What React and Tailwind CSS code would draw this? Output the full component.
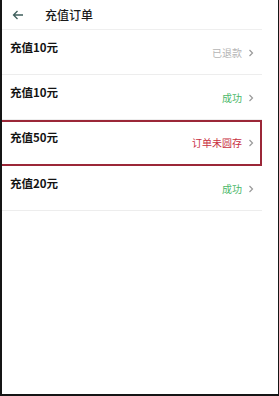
import React from "react";

const rows = [
  { title: "充值10元", status: "已退款", color: "text-[#b5b5b5]" },
  { title: "充值10元", status: "成功", color: "text-[#4cb86a]" },
  { title: "充值50元", status: "订单未圆存", color: "text-[#c8303f]", boxed: true },
  { title: "充值20元", status: "成功", color: "text-[#4cb86a]" },
];

function Chevron() {
  return (
    <svg width="6" height="8" viewBox="0 0 6 8" className="ml-[6px]">
      <path d="M1.5 1 L4.5 4 L1.5 7" fill="none" stroke="#9a9a9a" strokeWidth="1.2" />
    </svg>
  );
}

export default function App() {
  return (
    <div
      className="w-[279px] h-[396px] bg-white border-l-2 border-b-2 border-r border-[#151515] overflow-hidden"
      style={{ fontFamily: '"Noto Sans CJK SC", "Noto Sans", sans-serif' }}
    >
      <div className="w-[260px]">
        <div className="h-[30px] flex items-center border-b border-[#efefef]">
          <svg width="12" height="10" viewBox="0 0 12 10" className="ml-[10px]">
            <path d="M11 5 H1.5 M5.5 1 L1.5 5 L5.5 9" fill="none" stroke="#3f5f5c" strokeWidth="1.3" />
          </svg>
          <span className="ml-[21px] text-[12px] leading-[14px] text-[#1a1a1a] font-medium">充值订单</span>
        </div>
        {rows.map((r, i) => (
          <div
            key={i}
            className={
              r.boxed
                ? "h-[46px] flex items-start justify-between pl-[8px] pr-[6px] border-2 border-[#9b2738] -ml-[2px]"
                : "h-[45px] flex items-start justify-between pl-[8px] pr-[8px] border-b border-[#ededed]"
            }
          >
            <span className={(r.boxed ? "mt-[9px] " : "mt-[11px] ") + "text-[11.5px] leading-[12px] font-semibold text-[#141414]"}>
              {r.title}
            </span>
            <div className={(r.boxed ? "mt-[16px] " : "mt-[18px] ") + "flex items-center"}>
              <span className={"text-[10px] leading-[10px] " + r.color}>{r.status}</span>
              <Chevron />
            </div>
          </div>
        ))}
      </div>
    </div>
  );
}
